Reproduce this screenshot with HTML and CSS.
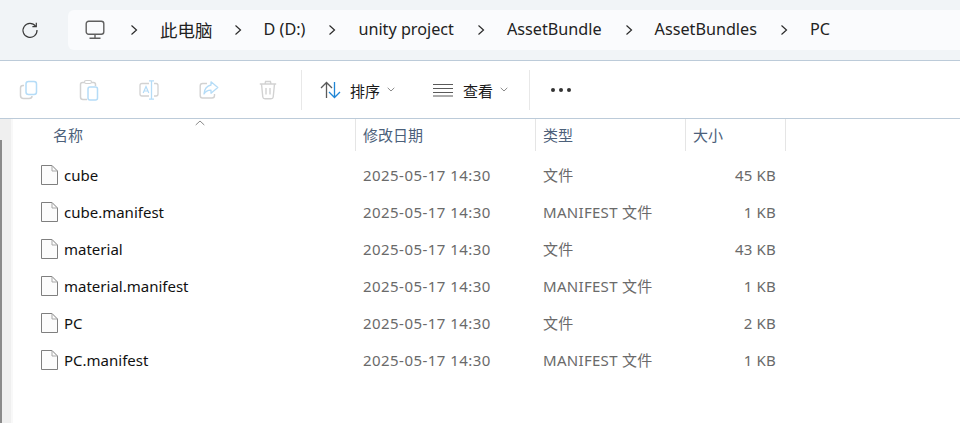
FILE: index.html
```html
<!DOCTYPE html>
<html lang="zh">
<head>
<meta charset="utf-8">
<title>PC</title>
<link rel="stylesheet" href="styles.css">
</head>
<body>
<svg class="defs" width="0" height="0" aria-hidden="true">
  <symbol id="file" viewBox="0 0 17 20">
    <path d="M.5.5H11L16.500 6V19.500H.5Z" fill="#fcfcfc" stroke="#7f7f7f"/>
    <path d="M11 .5V6H16.500" fill="none" stroke="#a8a8a8"/>
  </symbol>
  <symbol id="chev" viewBox="0 0 8 12">
    <path d="M1.500 1.500 6.500 6 1.500 10.500" fill="none" stroke="#2a2a2a" stroke-width="1.200"/>
  </symbol>
  <symbol id="caret" viewBox="0 0 8 5">
    <path d="M.7.8 4 4 7.300.8" fill="none" stroke="#8a8a8a"/>
  </symbol>
</svg>

<header class="nav">
  <button class="refresh" aria-label="刷新">
    <svg width="18" height="18" viewBox="0 0 18 18"><path d="M14.600 5.200A7 7 0 1 0 16 9" fill="none" stroke="#3a3a3a" stroke-width="1.200"/><path d="M15.300 1.800V5.700H11.400" fill="none" stroke="#3a3a3a" stroke-width="1.200"/></svg>
  </button>
  <nav class="crumbs">
    <svg class="pc" width="20" height="20" viewBox="0 0 20 20"><rect x="1.200" y="1.200" width="17.600" height="13" rx="2.500" fill="none" stroke="#5f5f5f" stroke-width="1.400"/><path d="M10 14.500V18M4.500 18.300H15.500" stroke="#5f5f5f" stroke-width="1.400" fill="none"/></svg>
    <svg class="chev" width="8" height="12"><use href="#chev"/></svg>
    <span class="crumb crumb-cjk">此电脑</span>
    <svg class="chev" width="8" height="12"><use href="#chev"/></svg>
    <span class="crumb">D (D:)</span>
    <svg class="chev" width="8" height="12"><use href="#chev"/></svg>
    <span class="crumb">unity project</span>
    <svg class="chev" width="8" height="12"><use href="#chev"/></svg>
    <span class="crumb">AssetBundle</span>
    <svg class="chev" width="8" height="12"><use href="#chev"/></svg>
    <span class="crumb">AssetBundles</span>
    <svg class="chev" width="8" height="12"><use href="#chev"/></svg>
    <span class="crumb">PC</span>
  </nav>
</header>

<section class="toolbar">
  <div class="tools">
    <svg width="20" height="20" viewBox="0 0 20 20" fill="none"><path d="M5 5.500H4Q1.500 5.500 1.500 8V15.500Q1.500 18.500 4.500 18.500H10Q13 18.500 13 16" stroke="#d2d2d2" stroke-width="1.500"/><rect x="7" y="1.500" width="10.500" height="13" rx="2.500" fill="#fff" stroke="#b5dcf7" stroke-width="1.500"/></svg>
    <svg width="20" height="22" viewBox="0 0 20 22" fill="none"><path d="M5 3.500H3.500Q1.500 3.500 1.500 5.500V18Q1.500 20.500 4 20.500H8M13 3.500H14.500Q16.500 3.500 16.500 5.500V7" stroke="#d2d2d2" stroke-width="1.500"/><rect x="5.500" y="1.500" width="7" height="3" rx="1.500" stroke="#d2d2d2" stroke-width="1.200"/><rect x="9" y="8" width="9.500" height="13" rx="2" fill="#fff" stroke="#b5dcf7" stroke-width="1.500"/></svg>
    <svg width="20" height="20" viewBox="0 0 20 20" fill="none"><path d="M10 3.500H3Q1 3.500 1 5.500V14Q1 16 3 16H10M15 3.500H17Q19 3.500 19 5.500V14Q19 16 17 16H15" stroke="#d2d2d2" stroke-width="1.300"/><path d="M12.500.8V19.200M10 .8H15M10 19.200H15" stroke="#b5dcf7" stroke-width="1.300"/><path d="M4.200 13 7 6.500 9.800 13M5.200 11H8.800" stroke="#b5dcf7" stroke-width="1.200"/></svg>
    <svg width="20" height="20" viewBox="0 0 20 20" fill="none"><path d="M8 3.500H3.500Q1.200 3.500 1.200 6V15.500Q1.200 18 3.500 18H13Q15.500 18 15.500 15.500V14" stroke="#d2d2d2" stroke-width="1.400"/><path d="M12 1.800 18.800 7.500 12 13.200V10.200Q7.500 10 5 14Q5.500 6.500 12 5Z" stroke="#b5dcf7" stroke-width="1.300" stroke-linejoin="round"/></svg>
    <svg width="18" height="20" viewBox="0 0 18 20" fill="none" stroke="#d2d2d2" stroke-width="1.400"><path d="M.8 4H17.200M6 4 6.600 1.500H11.400L12 4M2.500 4 3.800 17Q4 18.800 6 18.800H12Q14 18.800 14.200 17L15.500 4M7 8V14.500M11 8V14.500"/></svg>
  </div>
  <span class="sep"></span>
  <div class="menu sort">
    <svg width="21" height="18" viewBox="0 0 21 18" fill="none" stroke-width="1.300"><path d="M6.500 17V1.500M1 7 6.500 1.500 12 7" stroke="#5a5a5a"/><path d="M14.500 1V16.500M9 11 14.500 16.500 20 11" stroke="#1f86d6"/></svg>
    <span class="label">排序</span>
    <svg width="8" height="5"><use href="#caret"/></svg>
  </div>
  <div class="menu view">
    <svg width="20" height="14" viewBox="0 0 20 14" fill="none" stroke="#5a5a5a"><path d="M0 1.500H20M0 5.500H20M0 9.500H20M0 13H20"/></svg>
    <span class="label">查看</span>
    <svg width="8" height="5"><use href="#caret"/></svg>
  </div>
  <span class="sep"></span>
  <div class="more"><i></i><i></i><i></i></div>
</section>

<main class="content">
  <aside class="side"><span class="thumb"></span></aside>
  <div class="list">
    <svg class="sortup" width="10" height="6" viewBox="0 0 10 6"><path d="M.7 5 5 1 9.300 5" fill="none" stroke="#8a8a8a"/></svg>
    <div class="thead">
      <span class="th th-name">名称</span>
      <span class="th th-date">修改日期</span>
      <span class="th th-type">类型</span>
      <span class="th th-size">大小</span>
    </div>
    <div class="row"><span class="name"><svg width="17" height="20"><use href="#file"/></svg>cube</span><span class="date">2025-05-17 14:30</span><span class="type">文件</span><span class="size">45 KB</span></div>
    <div class="row"><span class="name"><svg width="17" height="20"><use href="#file"/></svg>cube.manifest</span><span class="date">2025-05-17 14:30</span><span class="type">MANIFEST 文件</span><span class="size">1 KB</span></div>
    <div class="row"><span class="name"><svg width="17" height="20"><use href="#file"/></svg>material</span><span class="date">2025-05-17 14:30</span><span class="type">文件</span><span class="size">43 KB</span></div>
    <div class="row"><span class="name"><svg width="17" height="20"><use href="#file"/></svg>material.manifest</span><span class="date">2025-05-17 14:30</span><span class="type">MANIFEST 文件</span><span class="size">1 KB</span></div>
    <div class="row"><span class="name"><svg width="17" height="20"><use href="#file"/></svg>PC</span><span class="date">2025-05-17 14:30</span><span class="type">文件</span><span class="size">2 KB</span></div>
    <div class="row"><span class="name"><svg width="17" height="20"><use href="#file"/></svg>PC.manifest</span><span class="date">2025-05-17 14:30</span><span class="type">MANIFEST 文件</span><span class="size">1 KB</span></div>
  </div>
</main>
</body>
</html>
```

FILE: styles.css
```css
* { box-sizing: border-box; }
html, body { margin: 0; height: 100%; overflow: hidden; }
body {
  display: flex;
  flex-direction: column;
  background: #fff;
  font-family: "Noto Sans", "Noto Sans CJK SC", sans-serif;
  color: #1a1a1a;
}
.defs { display: block; height: 0; }

.nav {
  display: flex;
  align-items: center;
  height: 61px;
  flex: none;
  padding-left: 21px;
  background: #f1f4f7;
  border-bottom: 1px solid #bccbd9;
}
.refresh {
  display: flex;
  width: 18px;
  height: 18px;
  padding: 0;
  border: 0;
  background: none;
  margin-right: 29px;
}
.crumbs {
  flex: 1;
  height: 40px;
  display: flex;
  align-items: center;
  padding-left: 17px;
  background: #fafbfd;
  border-radius: 6px 0 0 6px;
  font-size: 16.200px;
  color: #222;
}
.pc { margin-right: 25px; }
.chev { margin-right: 22px; }
.crumb { margin-right: 23px; padding-bottom: 2px; white-space: nowrap; }
.crumb-cjk { font-size: 17.500px; margin-right: 21px; }

.toolbar {
  display: flex;
  align-items: center;
  flex: none;
  height: 58px;
  border-bottom: 1px solid #bccbd9;
}
.tools {
  display: flex;
  align-items: center;
  gap: 40px;
  padding-left: 19px;
  width: 301px;
}
.sep { width: 1px; height: 40px; background: #e8e8e8; flex: none; }
.menu { display: flex; align-items: center; }
.sort { margin-left: 18px; width: 113px; }
.view { width: 96px; }
.label { font-size: 15px; margin: 0 7px 0 9px; padding-top: 2px; color: #1a1a1a; }
.view .label { margin-left: 10px; }
.more { display: flex; gap: 4px; margin-left: 21px; }
.more i { width: 4px; height: 4px; border-radius: 50%; background: #333; }

.content { flex: 1; display: flex; min-height: 0; }
.side {
  width: 13px;
  flex: none;
  background: linear-gradient(to right, #efefef 11px, #f8f8f8 11px);
  padding-top: 21px;
}
.thumb { display: block; width: 2px; height: 100%; background: #8a8a8a; }
.list { position: relative; flex: 1; }
.sortup { position: absolute; left: 182px; top: 1px; }
.thead {
  display: grid;
  grid-template-columns: 343px 180px 150px 100px;
  height: 32px;
}
.th {
  display: flex;
  align-items: center;
  padding: 0 0 2px 7px;
  font-size: 15px;
  color: #4c607a;
  border-right: 1px solid #e5e5e5;
}
.th-name { padding-left: 40px; }
.row {
  display: grid;
  grid-template-columns: 342px 180px 150px 100px;
  align-items: center;
  height: 37px;
  font-size: 15px;
  color: #6a6a6a;
}
.thead + .row { margin-top: 5px; }
.name { display: flex; align-items: center; gap: 6px; padding-left: 28px; color: #111; }
.date { padding-left: 8px; letter-spacing: .45px; }
.type { padding-left: 8px; letter-spacing: .3px; }
.size { text-align: right; padding-right: 9px; letter-spacing: .2px; }
```
